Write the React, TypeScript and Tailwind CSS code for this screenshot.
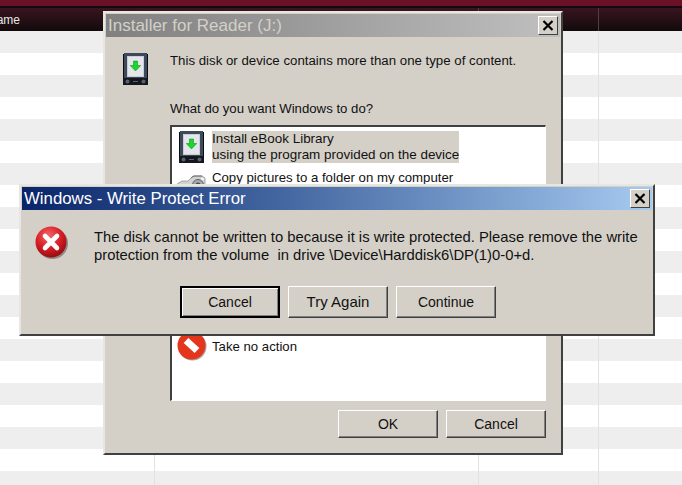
const rows = Array.from({ length: 21 }, (_, i) => i);

function DeviceIcon() {
  return (
    <svg width="26" height="32" viewBox="0 0 26 32" className="shrink-0">
      <rect x="0" y="1" width="25" height="31" fill="#0b0d12" />
      <rect x="1" y="0" width="23" height="29" fill="#3d4a5c" />
      <rect x="4" y="3" width="17" height="21" fill="#c9ced6" />
      <rect x="5" y="4" width="15" height="19" fill="#e4e7ea" />
      <path d="M10.500 8h4v4.500h3.200L12.500 18l-5.200-5.500h3.200z" fill="#18d92a" stroke="#0b7d18" strokeWidth="0.5" />
      <rect x="0" y="25" width="25" height="7" fill="#14171d" />
      <circle cx="4.500" cy="28.500" r="2" fill="#59616d" />
      <circle cx="20.500" cy="28.500" r="2" fill="#59616d" />
      <rect x="10" y="28" width="5" height="1" fill="#59616d" />
    </svg>
  );
}

function CameraIcon() {
  return (
    <svg width="30" height="24" viewBox="0 0 30 24" className="mt-[5px] shrink-0">
      <path d="M0 9l5-3h6l2-2 3-3h9l3 2v15l-7 4H7l-7-3z" fill="#d2d2d2" stroke="#8a8a8a" strokeWidth="0.7" />
      <path d="M14 3l3-2h8" stroke="#6f6f6f" strokeWidth="1" fill="none" />
      <circle cx="21" cy="10" r="5.500" fill="#a5a8ac" stroke="#5f6266" />
      <circle cx="21" cy="10" r="2.500" fill="#4a4e54" />
      <rect x="24" y="3" width="3" height="2" fill="#f4f4f4" />
    </svg>
  );
}

function ErrorIcon() {
  return (
    <svg width="34" height="34" viewBox="0 0 34 34" className="shrink-0">
      <defs>
        <radialGradient id="err" cx="0.42" cy="0.3" r="0.75">
          <stop offset="0" stopColor="#f0686a" />
          <stop offset="0.55" stopColor="#d81c24" />
          <stop offset="1" stopColor="#8c0a10" />
        </radialGradient>
      </defs>
      <circle cx="17.500" cy="17.500" r="15.500" fill="#8e8a84" />
      <circle cx="16" cy="16" r="15.500" fill="url(#err)" />
      <path d="M10 10l12 12M22 10l-12 12" stroke="#fff" strokeWidth="4.600" strokeLinecap="round" />
    </svg>
  );
}

function NoEntryIcon() {
  return (
    <svg width="30" height="30" viewBox="0 0 30 30" className="shrink-0">
      <circle cx="15.500" cy="15.500" r="14" fill="#a9a5a0" />
      <circle cx="14.500" cy="14.500" r="14" fill="#e3361c" />
      <path d="M9 9.500l11 10" stroke="#fff" strokeWidth="7" />
    </svg>
  );
}

function CloseBox() {
  return (
    <button className="flex h-[19px] w-5 items-center justify-center border border-t-white border-l-white border-r-[#404040] border-b-[#404040] bg-[#d4d0c8]">
      <svg width="12" height="11" viewBox="0 0 12 11">
        <path d="M1.500 1l9 9M10.500 1l-9 9" stroke="#000" strokeWidth="2.200" />
      </svg>
    </button>
  );
}

function DialogButton({ label, isDefault, wide }: { label: string; isDefault?: boolean; wide?: boolean }) {
  return (
    <button
      className={
        isDefault
          ? "flex w-[100px] items-center justify-center border-2 border-black bg-[#d4d0c8] text-[14px] text-[#111] shadow-[inset_1px_1px_0_#fff,inset_-1px_-1px_0_#808080]"
          : wide
            ? "flex w-[100px] items-center justify-center border border-t-white border-l-white border-r-[#404040] border-b-[#404040] bg-[#d4d0c8] text-[15px] text-[#111] shadow-[inset_-1px_-1px_0_#808080]"
            : "flex w-[100px] items-center justify-center border border-t-white border-l-white border-r-[#404040] border-b-[#404040] bg-[#d4d0c8] text-[14px] text-[#111] shadow-[inset_-1px_-1px_0_#808080]"
      }
    >
      {label}
    </button>
  );
}

export default function App() {
  return (
    <div className="relative h-[485px] w-[682px] overflow-hidden bg-white font-['Liberation_Sans',sans-serif]">
      {/* App behind the dialogs */}
      <div className="h-[6px] bg-[#6b1127]" />
      <div className="h-[2px] bg-[#120a0e]" />
      <div className="flex h-[23px] bg-gradient-to-b from-[#3a1420] to-[#120a0c] text-[12px] text-[#e8e8e8]">
        <div className="w-[155px] pt-[3px] -indent-[12px]">Name</div>
        <div className="w-[324px] border-r border-[#4a4045]" />
        <div className="w-[120px] border-r border-[#4a4045]" />
      </div>
      {rows.map((i) => (
        <div key={i} className={i % 2 === 0 ? "flex h-[22px] bg-[#eeeeee]" : "flex h-[22px] bg-white"}>
          <div className="w-[155px] border-r border-[#e2e2e2]" />
          <div className="w-[324px] border-r border-[#e2e2e2]" />
          <div className="w-[120px] border-r border-[#e2e2e2]" />
        </div>
      ))}

      {/* Installer window */}
      <div className="absolute left-[103px] top-[11px] flex h-[444px] w-[460px] flex-col border-2 border-t-[#e8e6e1] border-l-[#e8e6e1] border-r-[#404040] border-b-[#404040] bg-[#d4d0c8] p-px">
        <div className="flex h-[23px] shrink-0 items-center justify-between bg-gradient-to-r from-[#808080] to-[#c0c0c0] pl-[2px] pr-[2px]">
          <span className="text-[17px] text-[#d4d0c8]">Installer for Reader (J:)</span>
          <CloseBox />
        </div>
        <div className="flex flex-1 flex-col pl-[17px] pr-[14px]">
          <div className="mt-[16px] flex">
            <DeviceIcon />
            <div className="ml-[21px] text-[13.250px] leading-[16px] text-[#111]">
              This disk or device contains more than one type of content.
            </div>
          </div>
          <div className="ml-[47px] mt-[16px] text-[13.200px] leading-[16px] text-[#111]">What do you want Windows to do?</div>
          <div className="ml-[47px] mt-[8px] flex h-[276px] flex-col border border-t-2 border-l-2 border-t-[#404040] border-l-[#404040] border-r-white border-b-white bg-white pl-[7px]">
            <div className="mt-[4px] flex items-center">
              <DeviceIcon />
              <div className="ml-[7px] bg-[#d4d0c8] text-[13.450px] leading-[16px] text-[#111]">
                Install eBook Library
                <br />
                using the program provided on the device
              </div>
            </div>
            <div className="-ml-[2px] mt-[7px] flex items-start">
              <CameraIcon />
              <span className="ml-[5px] text-[13.200px] leading-[16px] text-[#111]">Copy pictures to a folder on my computer</span>
            </div>
            <div className="-ml-[2px] mt-[132px] flex">
              <NoEntryIcon />
              <span className="ml-[5px] mt-[8px] text-[13.200px] leading-[16px] text-[#111]">Take no action</span>
            </div>
          </div>
          <div className="ml-auto mt-[9px] flex h-[28px] gap-2">
            <DialogButton label="OK" />
            <DialogButton label="Cancel" />
          </div>
        </div>
      </div>

      {/* Write protect error */}
      <div className="absolute left-[19px] top-[184px] flex h-[152px] w-[636px] flex-col border-2 border-t-[#e8e6e1] border-l-[#e8e6e1] border-r-[#404040] border-b-[#404040] bg-[#d4d0c8] p-px">
        <div className="flex h-[23px] shrink-0 items-center justify-between bg-gradient-to-r from-[#0a246a] to-[#a6caf0] pl-[2px] pr-[2px]">
          <span className="text-[16.800px] text-white">Windows - Write Protect Error</span>
          <CloseBox />
        </div>
        <div className="flex pl-[13px] pt-[16px]">
          <ErrorIcon />
          <div className="ml-[25px] pt-[2px] text-[14.800px] leading-[18px] text-[#111]">
            The disk cannot be written to because it is write protected. Please remove the write
            <br />
            protection from the volume&nbsp; in drive \Device\Harddisk6\DP(1)0-0+d.
          </div>
        </div>
        <div className="ml-[158px] mt-[22px] flex h-[32px] gap-2">
          <DialogButton label="Cancel" isDefault />
          <DialogButton label="Try Again" wide />
          <DialogButton label="Continue" />
        </div>
      </div>
    </div>
  );
}
